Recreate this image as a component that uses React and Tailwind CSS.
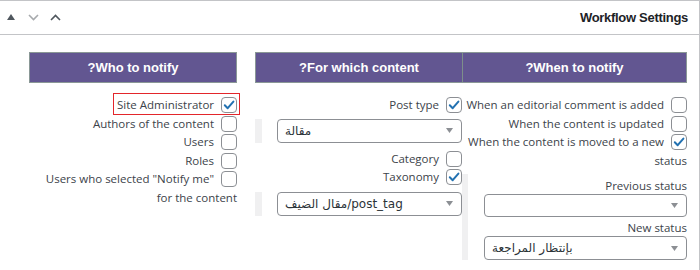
import React from "react";

const Check = ({ checked }) => (
  <span className="inline-flex w-4 h-4 rounded-[4px] border border-[#8c8f94] bg-white items-center justify-center align-middle ml-[7px] relative -top-[1px]">
    {checked && (
      <svg width="12" height="12" viewBox="0 0 12 12" fill="none">
        <path d="M1.8 6.3 L4.7 9.2 L10.4 2.6" stroke="#2271b1" strokeWidth="2" strokeLinecap="round" strokeLinejoin="round" />
      </svg>
    )}
  </span>
);

const Row = ({ checked, children, className = "" }) => (
  <div dir="rtl" className={"text-right leading-[18.6px] " + className}>
    <Check checked={checked} />
    <span>{children}</span>
  </div>
);

const Select = ({ children, className = "" }) => (
  <div className={"h-6 rounded-[4px] border border-[#8c8f94] bg-white flex items-center justify-between pl-[7px] pr-[8px] " + className}>
    <span className="font-['DejaVu_Sans',sans-serif] text-[12px] text-[#2c3338] whitespace-nowrap">{children}</span>
    <svg width="7" height="5" viewBox="0 0 7 5">
      <path d="M0 0 H7 L3.5 5 Z" fill="#8c8f94" />
    </svg>
  </div>
);

export default function App() {
  return (
    <div className="w-[700px] h-[270px] bg-white overflow-hidden">
      <div className="w-[700px] h-[290px] border-t border-r border-[#c3c4c7] font-['Open_Sans',sans-serif] text-[11.5px] text-[#3c434a]">
        {/* Header */}
        <div className="h-[34px] border-b border-[#c3c4c7] flex items-center justify-between pl-[7px] pr-[11px]">
          <div className="flex items-center gap-[11px] -mt-[1px]">
            <svg width="8" height="6" viewBox="0 0 8 6">
              <path d="M0 6 L4 0 L8 6 Z" fill="#50575e" />
            </svg>
            <svg width="11" height="7" viewBox="0 0 11 7" className="ml-[2px]">
              <path d="M1 1 L5.5 5.5 L10 1" stroke="#a7aaad" strokeWidth="1.6" fill="none" />
            </svg>
            <svg width="11" height="7" viewBox="0 0 11 7">
              <path d="M1 6 L5.5 1.5 L10 6" stroke="#50575e" strokeWidth="1.6" fill="none" />
            </svg>
          </div>
          <div className="font-['Liberation_Sans',Arial,sans-serif] font-bold text-[13px] tracking-[-0.3px] text-[#1d2327]">
            Workflow Settings
          </div>
        </div>

        {/* Body */}
        <div className="flex pt-[17px] pl-[29px]">
          {/* Who to notify */}
          <div className="w-[208px] relative">
            <div
              dir="rtl"
              className="h-[31px] bg-[#625691] border border-[#8a9896] flex items-center justify-center text-white font-['Liberation_Sans',Arial,sans-serif] font-bold text-[13px]"
            >
              Who to notify?
            </div>
            <div className="mt-[13px]">
              <Row checked>Site Administrator</Row>
              <Row>Authors of the content</Row>
              <Row>Users</Row>
              <Row>Roles</Row>
              <Row>
                <span dir="ltr">Users who selected "Notify me"</span>
                <br />
                <span dir="ltr">for the content</span>
              </Row>
            </div>
            <div className="absolute left-[84px] top-[41px] w-[127px] h-[22px] border border-[#e3262b]"></div>
          </div>

          {/* For which content + When to notify */}
          <div className="ml-[18px] w-[432px]">
            <div className="h-[31px] bg-[#625691] border border-[#8a9896] flex text-white font-['Liberation_Sans',Arial,sans-serif] font-bold text-[13px]">
              <div dir="rtl" className="w-[206px] flex items-center justify-center">
                For which content?
              </div>
              <div dir="rtl" className="flex-1 border-l border-[#7d8f8a] flex items-center justify-center">
                When to notify?
              </div>
            </div>

            <div className="flex mt-[13px]">
              {/* middle */}
              <div className="w-[207px]">
                <Row checked>Post type</Row>
                <div className="flex mt-[4px]">
                  <div className="w-[7px] h-6 bg-[#f0f0f1]"></div>
                  <Select className="ml-[15px] flex-1">مقالة</Select>
                </div>
                <Row className="mt-[7px]">Category</Row>
                <Row checked>Taxonomy</Row>
                <div className="flex mt-[5px]">
                  <div className="w-[7px] h-6 bg-[#f0f0f1]"></div>
                  <Select className="ml-[15px] flex-1">مقال الضيف/post_tag</Select>
                </div>
              </div>

              {/* right */}
              <div className="w-[225px]">
                <Row>When an editorial comment is added</Row>
                <Row>When the content is updated</Row>
                <Row checked>When the content is moved to a new status</Row>
                <div className="flex mt-[4px]">
                  <div className="w-[6px] bg-[#f0f0f1]"></div>
                  <div className="flex-1 ml-[16px] pt-[3px]">
                    <div className="text-right leading-[17px]">Previous status</div>
                    <Select className="h-[23px]"></Select>
                    <div className="text-right leading-[17px] mt-[2px]">New status</div>
                    <Select>بإنتظار المراجعة</Select>
                  </div>
                </div>
              </div>
            </div>
          </div>
        </div>
      </div>
    </div>
  );
}
